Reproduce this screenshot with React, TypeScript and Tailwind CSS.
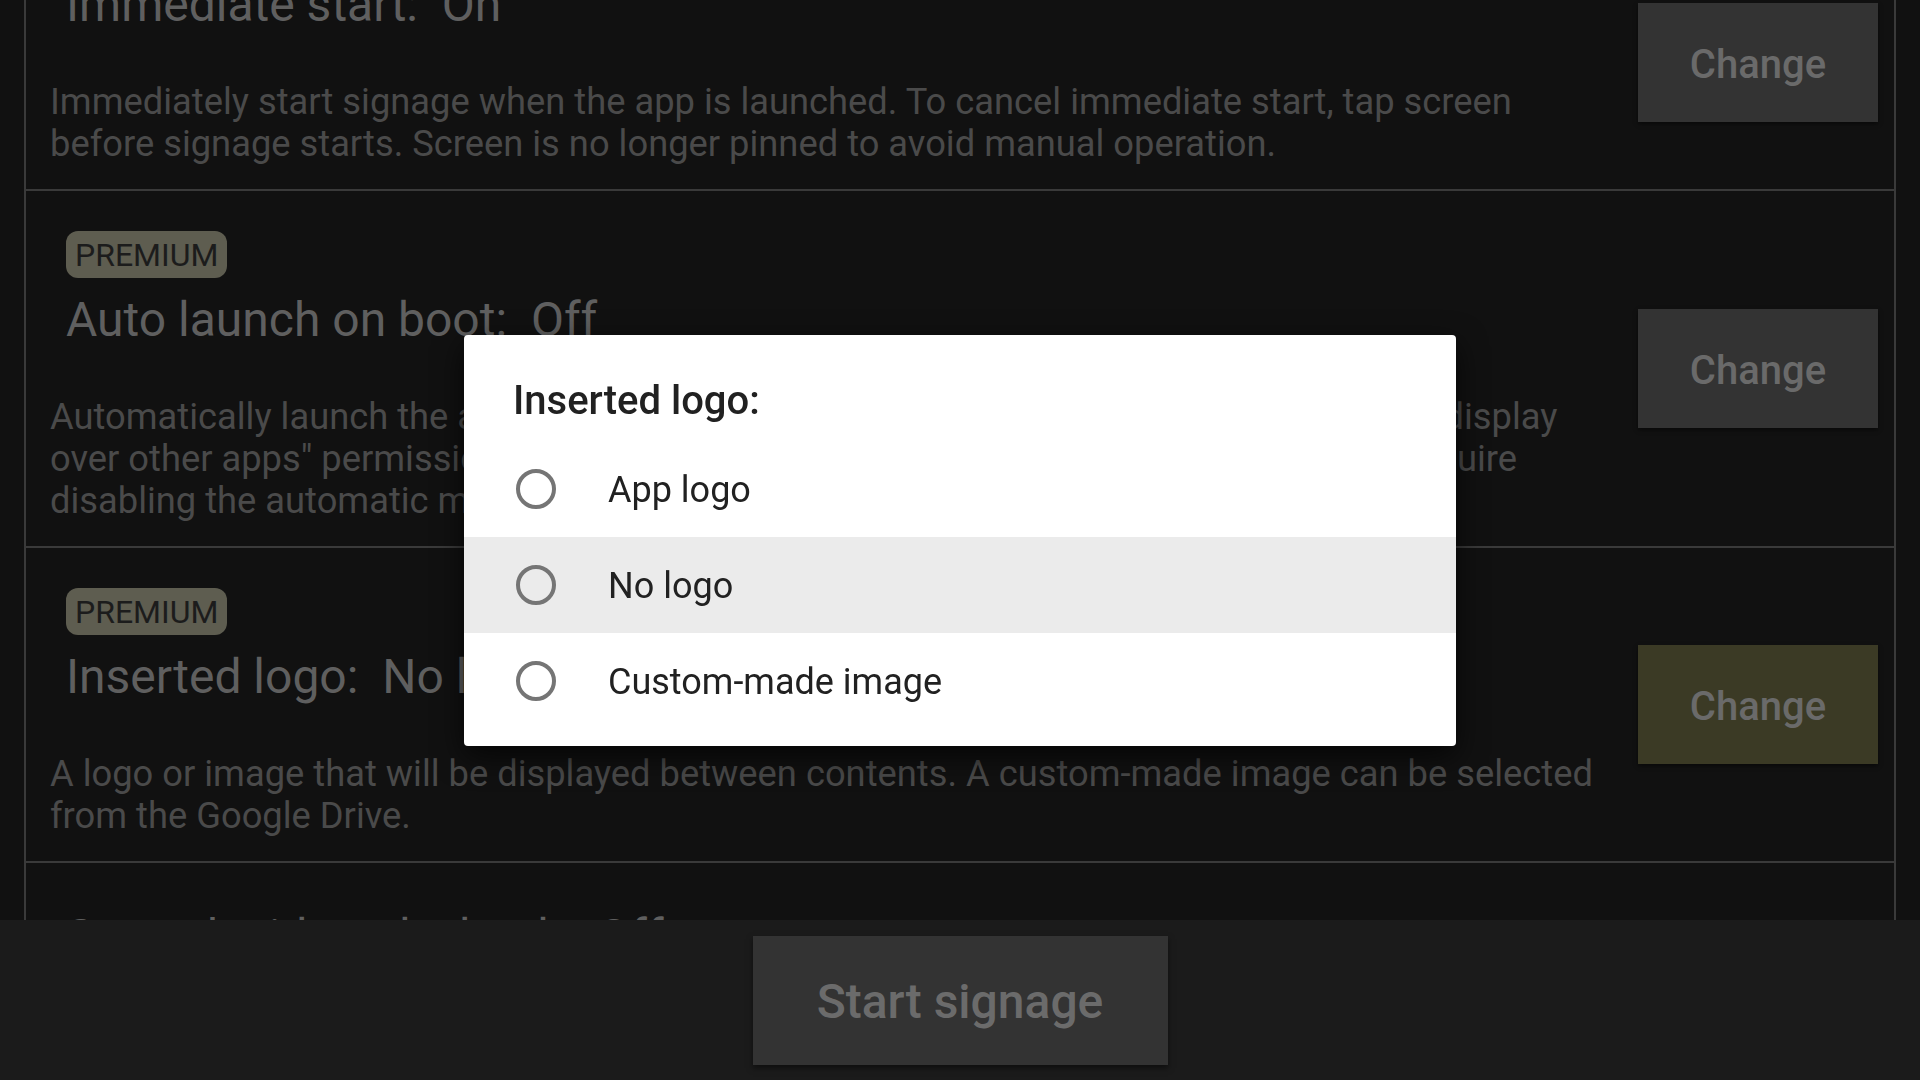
import React from 'react';

interface SettingRow {
  premium: boolean;
  title: string;
  lines: string[];
  active?: boolean;
  padTop?: string;
}

const rows: SettingRow[] = [
  {
    premium: false,
    title: 'Immediate start:  On',
    lines: [
      'Immediately start signage when the app is launched. To cancel immediate start, tap screen',
      'before signage starts. Screen is no longer pinned to avoid manual operation.',
    ],
  },
  {
    premium: true,
    title: 'Auto launch on boot:  Off',
    lines: [
      'Automatically launch the app when the device is booted up. This function requires the "display',
      'over other apps" permission. Depending on the device and OS version, this may also require',
      'disabling the automatic memory management for this app.',
    ],
  },
  {
    premium: true,
    title: 'Inserted logo:  No logo',
    lines: [
      'A logo or image that will be displayed between contents. A custom-made image can be selected',
      'from the Google Drive.',
    ],
    active: true,
  },
  {
    premium: false,
    title: 'Smooth video playback:  Off',
    lines: [
      'Preload the next video to reduce the gap between contents. May not work on some devices.',
      'Uses more memory while signage is playing.',
    ],
    padTop: 'pt-[45px]',
  },
];

const options = ['App logo', 'No logo', 'Custom-made image'];

function Row({ row }: { row: SettingRow }) {
  return (
    <div className="flex items-center border-b-2 border-[#3a3a3a]">
      <div className={`flex-1 ${row.padTop ?? 'pt-[40px]'} pb-[24px]`}>
        {row.premium && (
          <div className="mb-[13px] flex pl-[40px]">
            <span className="flex h-[47px] items-center rounded-[12px] bg-[#5e5d50] px-[9px] text-[32px] text-[#1c1c1c]">
              PREMIUM
            </span>
          </div>
        )}
        <div className="h-[58px] whitespace-pre pl-[40px] text-[48px] leading-[58px] text-[#5f5f5f]">
          {row.title}
        </div>
        <div className="mt-[47px] pl-[24px] text-[36.3px] leading-[42px] text-[#4a4a4a]">
          {row.lines.map((line) => (
            <div key={line} className="h-[42px] whitespace-nowrap">
              {line}
            </div>
          ))}
        </div>
      </div>
      <button
        className={`mr-[16px] flex h-[119px] w-[240px] shrink-0 items-center justify-center pt-[4px] text-[40px] font-medium text-[#6a6a6a] shadow-[0_2px_4px_rgba(0,0,0,0.5)] ${
          row.active ? 'bg-[#3b3a25]' : 'bg-[#333333]'
        }`}
      >
        Change
      </button>
    </div>
  );
}

export default function App() {
  return (
    <div className="flex h-screen w-full flex-col overflow-hidden bg-[#111111] [font-family:Roboto,'Noto_Sans',sans-serif]">
      {/* Settings list (scrolled) */}
      <div className="min-h-0 flex-1 overflow-hidden">
        <div className="mx-[24px] -mt-[64px] border-x-2 border-[#3a3a3a]">
          {rows.map((row) => (
            <Row key={row.title} row={row} />
          ))}
        </div>
      </div>

      {/* Bottom bar */}
      <div className="flex h-[160px] shrink-0 items-center justify-center bg-[#1b1b1b]">
        <button className="flex h-[129px] w-[415px] items-center justify-center pt-[4px] text-[48px] font-medium text-[#6b6b6b] bg-[#333333] shadow-[0_3px_6px_rgba(0,0,0,0.5)]">
          Start signage
        </button>
      </div>

      {/* Dialog */}
      <div className="fixed inset-0 flex items-center justify-center">
        <div className="w-[992px] rounded-[4px] bg-white pt-[41px] pb-[17px] shadow-[0_10px_30px_rgba(0,0,0,0.7)]">
          <div className="px-[49px] pt-[1px] text-[40px] leading-[48px] font-medium text-[#212121]">Inserted logo:</div>
          <div className="mt-[16px]">
            {options.map((opt) => (
              <div
                key={opt}
                className={`flex h-[96px] items-center pl-[52px] ${opt === 'No logo' ? 'bg-[#ebebeb]' : ''}`}
              >
                <span className="h-[40px] w-[40px] shrink-0 rounded-full border-[4px] border-[#757575]" />
                <span className="ml-[52px] pt-[3px] text-[36px] text-[#212121]">{opt}</span>
              </div>
            ))}
          </div>
        </div>
      </div>
    </div>
  );
}
